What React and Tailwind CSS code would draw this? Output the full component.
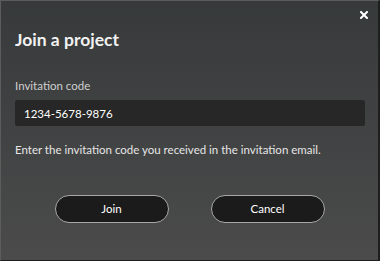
import React, { useState } from "react";

function App() {
  const [code, setCode] = useState("1234-5678-9876");

  return (
    <div className="w-[380px] h-[261px] border-t border-l border-[#5c5c5c] border-r-2 border-r-[#1e1e1e] border-b border-b-[#1e1e1e] bg-gradient-to-b from-[#373a3b] to-[#4b4b4b] text-white font-['Lato',sans-serif] flex flex-col relative overflow-hidden">
      <button className="absolute right-[7px] top-[7px] w-[14px] h-[14px] flex items-center justify-center">
        <svg width="8" height="8" viewBox="0 0 8 8">
          <path d="M1 1 L7 7 M7 1 L1 7" stroke="#fff" strokeWidth="2" strokeLinecap="square" />
        </svg>
      </button>
      <div className="pl-[14px] pr-[13px] pt-[27px]">
        <h1 className="text-[17.5px] font-bold leading-[24px] text-[#f2f2f2]">Join a project</h1>
        <div className="mt-[26px] text-[11.5px] leading-[16px] text-[#cfcfcf]">Invitation code</div>
        <input
          className="mt-[6px] w-full h-[26px] bg-[#272727] rounded-[2px] px-[9px] text-[11.5px] text-white outline-none"
          value={code}
          onChange={e => setCode(e.currentTarget.value)}
        />
        <p className="mt-[16px] text-[11.5px] leading-[16px] text-[#e6e6e6]">
          Enter the invitation code you received in the invitation email.
        </p>
      </div>
      <div className="flex justify-center gap-x-[42px] mt-[37px]">
        <button className="w-[114px] h-[28px] rounded-full bg-[#1b1b1b] border border-[#a8a8a8] text-[11.5px] text-white">
          Join
        </button>
        <button className="w-[114px] h-[28px] rounded-full bg-[#1b1b1b] border border-[#a8a8a8] text-[11.5px] text-white">
          Cancel
        </button>
      </div>
    </div>
  );
}

export default App;
